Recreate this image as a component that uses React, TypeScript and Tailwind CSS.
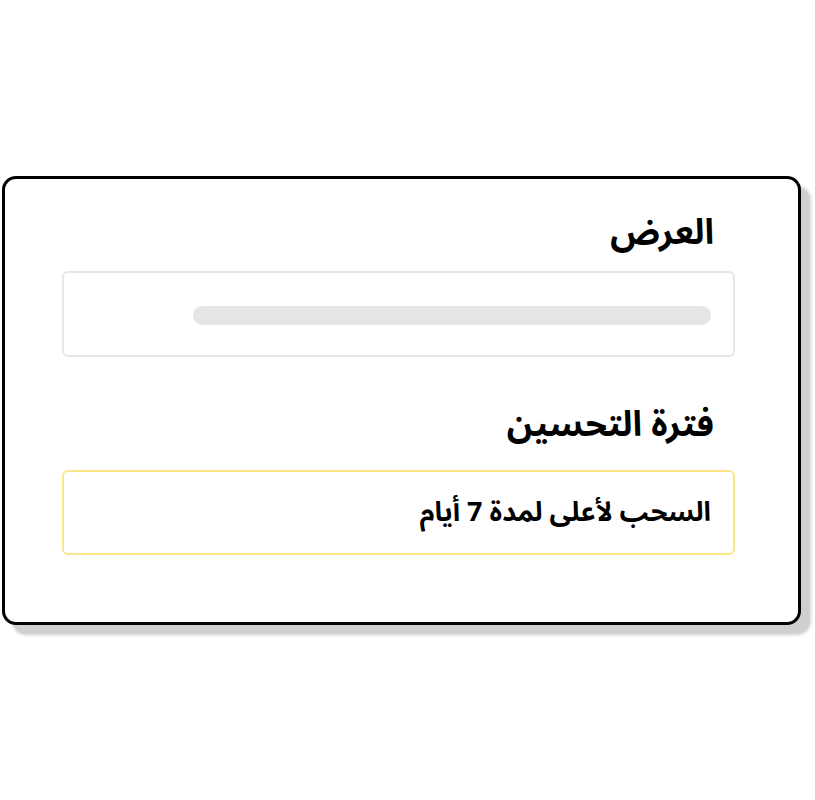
export default function App() {
  return (
    <div className="flex h-[800px] w-[815px] items-center bg-white pl-[2px]">
      <div
        dir="rtl"
        className="flex h-[449px] w-[799px] flex-col rounded-[14px] border-[3px] border-black bg-white pr-[63px] pl-[57px] pt-[28px] shadow-[10px_10px_3px_0_#cfcfcf]"
        style={{ fontFamily: '"Noto Sans Arabic", "Noto Sans", "DejaVu Sans", sans-serif' }}
      >
        <h2 className="pr-[21px] text-[35px] font-bold leading-[52px] text-black">العرض</h2>
        <div className="mt-[12px] flex h-[86px] items-center rounded-[6px] border-2 border-[#e6e6e6] pr-[22px] pt-[4px]">
          <div className="h-[19px] w-[518px] rounded-full bg-[#e5e5e5]" />
        </div>
        <h2 className="mt-[42px] pr-[21px] text-[35px] font-bold leading-[52px] text-black">فترة التحسين</h2>
        <div className="mt-[19px] flex h-[85px] items-center rounded-[6px] border-2 border-[#fde68a] pr-[22px] pt-[3px]">
          <span className="text-[27px] font-bold text-black">السحب لأعلى لمدة 7 أيام</span>
        </div>
      </div>
    </div>
  );
}
